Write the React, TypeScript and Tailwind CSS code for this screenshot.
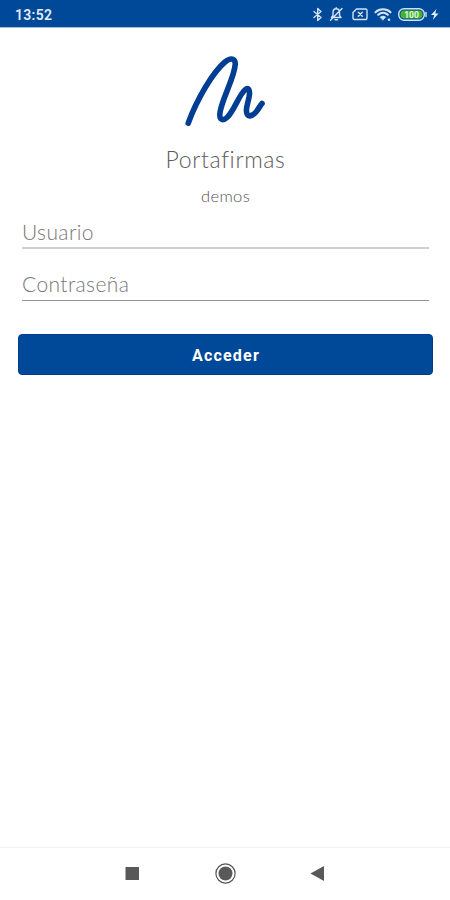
import React from 'react';

function StatusIcons() {
  return (
    <svg className="h-[27px] w-[138px]" viewBox="308 0 138 27" fill="none" stroke="#d3e2f6" strokeWidth="1.4" strokeLinecap="round" strokeLinejoin="round">
      <path d="M314 11.5 L321 17.5 L317.7 20.5 V8.5 L321 11.5 L314 17.5" />
      <path d="M331.5 17.5 H341 L339.5 15.5 V12.5 C339.5 7.500 333 7.500 333 12.500 V15.500 L331.500 17.500 M336.200 8.500 V7.800 M335 19.700 H337.500 M330.500 20.300 L342 8.500" />
      <path d="M356.500 9 H365.500 Q367 9 367 10.500 V18 Q367 19.500 365.500 19.500 H354.500 Q353 19.500 353 18 V12.500 Z" />
      <path d="M358.300 12.300 L362.300 16.300 M362.300 12.300 L358.300 16.300" />
      <path d="M375.500 12.300 C379.500 8.300 386.500 8.300 390.500 12.300 M378.200 14.800 C381 12.200 385 12.200 387.800 14.800" strokeWidth="2.100" />
      <path d="M380.300 17 Q383 15 385.700 17 L383 20 Z" fill="#d3e2f6" strokeWidth=".7" />
      <circle cx="389" cy="19.700" r=".6" />
      <rect x="398.700" y="8.700" width="25.600" height="11.600" rx="5.500" />
      <rect x="400.500" y="10.500" width="22" height="8" rx="3.700" fill="#46b52a" stroke="none" />
      <path d="M426 12.500 V16.500" />
      <text x="411.500" y="17.500" textAnchor="middle" fill="#e8f7e6" stroke="none" className="font-['Roboto',sans-serif] text-[8.5px] font-bold">100</text>
      <path d="M436.500 9 L431 15 H434.300 L432.800 20 L438.500 13.500 H435.200 Z" fill="#e3edfa" stroke="none" />
    </svg>
  );
}

function Field({ label, className }: { label: string; className: string }) {
  return (
    <label className={`mr-[21px] ml-[22px] flex items-end text-[21px] leading-[30px] font-light tracking-[0.4px] text-[#777] ${className}`}>
      <span className="whitespace-nowrap">{label}</span>
    </label>
  );
}

export default function App() {
  return (
    <div className="flex h-[900px] w-[450px] flex-col overflow-hidden bg-white font-['Lato',sans-serif]">
      <header className="flex h-[27px] shrink-0 items-center justify-between bg-[#004998] pr-1 pl-[15px] shadow-[0_1px_0_#a9bfdd]">
        <span className="pt-[3px] font-['Roboto',sans-serif] text-[14px] leading-5 font-semibold tracking-[0.3px] text-[#e3edfa]">13:52</span>
        <StatusIcons />
      </header>

      <main className="flex flex-1 flex-col">
        <svg className="mt-[23px] h-20 w-[90px] self-center" viewBox="180 50 90 80" fill="none" stroke="#003e94" strokeWidth="5.600" strokeLinecap="round" strokeLinejoin="round">
          <path d="M188.200 123.200 C197 99 213 72 225 62 C231 57 235.500 58.500 235.200 64.500 C234.500 77 223 97 220.300 111 C218.500 120 222.500 121.500 227 117.500 C234 111.300 239.500 93.500 245.500 89.500 C248.500 87.500 249.700 90 249.500 94 C249 101 245.800 106 246.500 111.500 C247.200 118.500 252.500 116 256 112 C258.500 109 260 106 262 103.500" />
        </svg>
        <h1 className="mt-[14px] pl-px text-center text-[23px] leading-[30px] font-light tracking-[0.65px] text-[#5b5b5b]">Portafirmas</h1>
        <p className="mt-[11px] pl-px text-center text-[16.5px] leading-[22px] font-light tracking-[0.4px] text-[#555]">demos</p>
        <Field label="Usuario" className="mt-[11px] h-[31px] border-b-2 border-[#cfcfcf]" />
        <Field label="Contraseña" className="mt-[22px] h-[30px] border-b border-[#929292] pb-px" />
        <button className="mr-[17px] ml-[18px] mt-[33px] h-[41px] rounded-[4px] border border-[#003b8e] bg-[#004998] pt-[3px] pl-px font-['Roboto',sans-serif] text-[16px] font-bold tracking-[1.2px] text-white">
          Acceder
        </button>
      </main>

      <nav className="flex h-[53px] shrink-0 border-t border-[#f3f3f3] bg-white">
        <svg className="h-[52px] w-[450px]" viewBox="0 848 450 52">
          <rect x="125.500" y="867" width="13.500" height="13" fill="#595959" />
          <circle cx="225.500" cy="873.500" r="9.600" fill="none" stroke="#555" strokeWidth="1.200" />
          <circle cx="225.500" cy="873.500" r="7" fill="#595959" />
          <path d="M310.500 873.500 L324 866 V881 Z" fill="#595959" />
        </svg>
      </nav>
    </div>
  );
}
